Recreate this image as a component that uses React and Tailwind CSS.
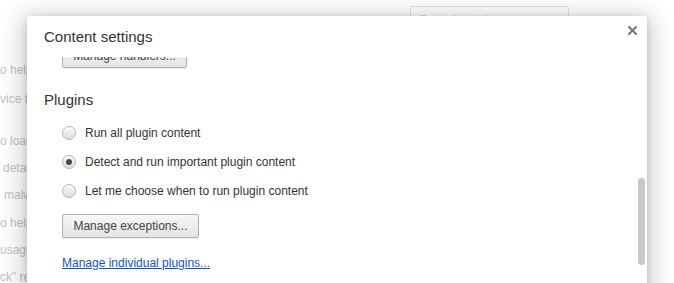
import React from 'react';

const bgLines = [
  { text: 'o help', cls: 'mt-[22px]' },
  { text: 'vice t', cls: 'mt-[13px]' },
  { text: 'o load', cls: 'mt-[26px]' },
  { text: 'detai', cls: 'mt-[11px] pl-[3px]' },
  { text: 'malwa', cls: 'mt-[11px] pl-[4px]' },
  { text: 'o help', cls: 'mt-[12px]' },
  { text: 'usage', cls: 'mt-[11px]' },
  { text: 'ck" re', cls: 'mt-[11px]' },
];

const options = [
  { label: 'Run all plugin content', checked: false },
  { label: 'Detect and run important plugin content', checked: true },
  { label: 'Let me choose when to run plugin content', checked: false },
];

const Radio = ({ checked }) => (
  <span className="flex h-[14px] w-[14px] items-center justify-center rounded-full border border-[#b4b4b4] bg-gradient-to-b from-[#fbfbfb] to-[#dcdcdc] shadow-[inset_0_1px_1px_rgba(255,255,255,0.8)]">
    {checked && <span className="h-[6px] w-[6px] rounded-full bg-[#4a4a4a]" />}
  </span>
);

const Button = ({ children, className = '' }) => (
  <button
    className={`h-[24px] rounded-[2px] border border-[#b0b0b0] bg-gradient-to-b from-[#f7f7f7] to-[#e4e4e4] text-[12px] leading-none text-[#444] shadow-[0_1px_0_rgba(0,0,0,0.08)] ${className}`}
  >
    {children}
  </button>
);

const App = () => {
  return (
    <div
      className="relative h-[283px] w-[674px] overflow-hidden bg-white"
      style={{ fontFamily: '"Liberation Sans", Arial, sans-serif' }}
    >
      {/* page behind the overlay */}
      <div className="flex h-[40px] items-start">
        <div className="ml-[410px] mt-[6px] flex h-[28px] w-[159px] items-center rounded-[2px] border border-[#e2e2e2] px-[8px] text-[13px] text-[#d0d0d0]">
          Search settings
        </div>
      </div>
      <div className="flex flex-col text-[12px] leading-[16px] text-[#c2c2c2]">
        {bgLines.map((l, i) => (
          <div key={i} className={`whitespace-nowrap ${l.cls}`}>
            {l.text}
          </div>
        ))}
      </div>

      {/* dialog */}
      <div className="absolute left-[27px] top-[16px] flex h-[300px] w-[620px] flex-col rounded-[3px] bg-white shadow-[0_4px_23px_5px_rgba(0,0,0,0.2),0_2px_6px_rgba(0,0,0,0.15)]">
        <div className="px-[17px] pb-[11px] pt-[12px]">
          <h1 className="text-[15px] leading-[18px] text-[#333]">Content settings</h1>
        </div>
        <button className="absolute right-[10px] top-[10px] flex h-[9px] w-[9px] items-center justify-center">
          <svg width="9" height="9" viewBox="0 0 9 9">
            <path d="M1 1 L8 8 M8 1 L1 8" stroke="#777" strokeWidth="2" strokeLinecap="square" />
          </svg>
        </button>

        <div className="flex-1 overflow-hidden px-[17px]">
          <div className="mt-[-14px] flex flex-col">
            <div className="pl-[18px]">
              <Button className="w-[125px]">Manage handlers...</Button>
            </div>

            <h2 className="mt-[23px] text-[15px] leading-[18px] text-[#333]">Plugins</h2>

            <div className="mt-[15px] flex flex-col gap-[11px] pl-[18px]">
              {options.map((o) => (
                <label key={o.label} className="flex h-[18px] items-center gap-[9px]">
                  <Radio checked={o.checked} />
                  <span className="text-[12px] leading-[18px] text-[#333]">{o.label}</span>
                </label>
              ))}
            </div>

            <div className="mt-[13px] pl-[18px]">
              <Button className="w-[137px]">Manage exceptions...</Button>
            </div>

            <div className="mt-[12px] pl-[18px]">
              <a href="#" className="text-[12px] leading-[18px] text-[#1155cc] underline">
                Manage individual plugins...
              </a>
            </div>
          </div>
        </div>

        <div className="absolute right-[2px] top-[162px] h-[87px] w-[7px] rounded-full bg-[#c8c8c8]" />
      </div>
    </div>
  );
};

export default App;
